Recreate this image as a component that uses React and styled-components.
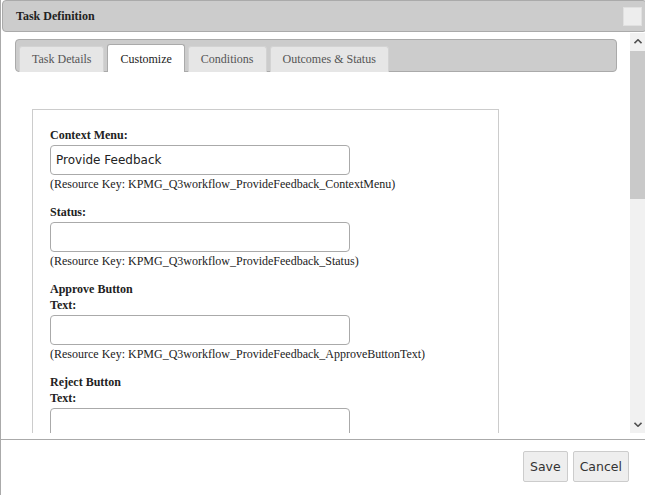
import React from 'react';
import styled, { createGlobalStyle } from 'styled-components';

const GlobalStyle = createGlobalStyle`
  html, body {
    margin: 0;
    padding: 0;
    background: #fff;
  }
  body {
    font-family: "Liberation Serif", "Times New Roman", serif;
    font-size: 12px;
    color: #333;
  }
`;

const Dialog = styled.div`
  width: 645px;
  height: 495px;
  box-sizing: border-box;
  border-left: 1px solid #aaa;
  display: flex;
  flex-direction: column;
  overflow: hidden;
`;

const TitleBar = styled.div`
  height: 32px;
  box-sizing: border-box;
  margin-left: 1px;
  margin-right: -2px;
  background: #ccc;
  border: 1px solid #aaa;
  border-radius: 4px;
  display: flex;
  align-items: center;
  justify-content: space-between;
  padding: 0 4px 0 13px;
  flex-shrink: 0;
`;

const Title = styled.span`
  font-weight: bold;
  font-size: 12px;
  color: #222;
`;

const CloseBox = styled.span`
  width: 19px;
  height: 19px;
  box-sizing: border-box;
  background: #ededed;
  border: 1px solid #e0e0e0;
`;

const Body = styled.div`
  height: 400px;
  margin-top: 1px;
  display: flex;
  flex-shrink: 0;
`;

const Content = styled.div`
  flex: 1;
  overflow: hidden;
  padding: 6px 13px 0 14px;
`;

const TabBar = styled.div`
  height: 33px;
  box-sizing: border-box;
  background: #ccc;
  border: 1px solid #aaa;
  border-radius: 4px;
  display: flex;
  align-items: flex-end;
  gap: 3px;
  padding: 0 3px;
`;

const Tab = styled.div`
  height: ${p => (p.active ? '28px' : '26px')};
  box-sizing: border-box;
  margin-bottom: -1px;
  padding: ${p => (p.active ? '2px' : '0')} 12px 0;
  display: flex;
  align-items: center;
  font-size: 12px;
  background: ${p => (p.active ? '#fff' : '#e6e6e6')};
  border: 1px solid ${p => (p.active ? '#aaa' : '#d3d3d3')};
  border-bottom: none;
  border-radius: 3px 3px 0 0;
  color: ${p => (p.active ? '#212121' : '#555')};
`;

const FormBox = styled.div`
  width: 467px;
  box-sizing: border-box;
  margin: 37px 0 0 17px;
  border: 1px solid #ccc;
  padding: 17px 17px 20px;
`;

const Field = styled.div`
  margin-bottom: 12px;
`;

const Label = styled.div`
  font-weight: bold;
  font-size: 12px;
  line-height: 16px;
  color: #222;
`;

const TextInput = styled.input`
  display: block;
  width: 300px;
  height: 30px;
  box-sizing: border-box;
  margin-top: 2px;
  border: 1px solid #aaa;
  border-radius: 4px;
  padding: 0 5px;
  font-family: "DejaVu Sans", Verdana, sans-serif;
  font-size: 12px;
  color: #222;
  outline: none;
`;

const KeyNote = styled.div`
  font-size: 12px;
  line-height: 16px;
  color: #222;
  margin-top: 1px;
`;

const ScrollBar = styled.div`
  width: 15px;
  background: #f1f1f1;
  display: flex;
  flex-direction: column;
  flex-shrink: 0;
`;

const ScrollButton = styled.div`
  height: 17px;
  display: flex;
  align-items: center;
  justify-content: center;
  flex-shrink: 0;
`;

const ScrollTrack = styled.div`
  flex: 1;
  padding-top: 1px;
`;

const Thumb = styled.div`
  height: 148px;
  background: #c9c9c9;
`;

const Footer = styled.div`
  margin-top: 6px;
  border-top: 1px solid #aaa;
  display: flex;
  justify-content: flex-end;
  gap: 5px;
  padding: 11px 16px 0 0;
`;

const Button = styled.button`
  height: 31px;
  box-sizing: border-box;
  padding: 0 6px;
  background: #eee;
  border: 1px solid #ccc;
  border-radius: 2px;
  font-family: "DejaVu Sans", Verdana, sans-serif;
  font-size: 12.5px;
  color: #333;
`;

const Chevron = ({ down }) => (
  <svg width="8" height="5" viewBox="0 0 8 5">
    <path
      d={down ? 'M0.5 0.8 L4 4.2 L7.5 0.8' : 'M0.5 4.2 L4 0.8 L7.5 4.2'}
      fill="none"
      stroke="#505050"
      strokeWidth="1.6"
    />
  </svg>
);

const tabs = ['Task Details', 'Customize', 'Conditions', 'Outcomes & Status'];

const fields = [
  { label: ['Context Menu:'], value: 'Provide Feedback', key: 'ContextMenu' },
  { label: ['Status:'], value: '', key: 'Status' },
  { label: ['Approve Button', 'Text:'], value: '', key: 'ApproveButtonText' },
  { label: ['Reject Button', 'Text:'], value: '', key: 'RejectButtonText' },
];

const App = () => {
  return (
    <>
      <GlobalStyle />
      <Dialog>
        <TitleBar>
          <Title>Task Definition</Title>
          <CloseBox />
        </TitleBar>
        <Body>
          <Content>
            <TabBar>
              {tabs.map(t => (
                <Tab key={t} active={t === 'Customize'}>{t}</Tab>
              ))}
            </TabBar>
            <FormBox>
              {fields.map(f => (
                <Field key={f.key}>
                  {f.label.map(l => <Label key={l}>{l}</Label>)}
                  <TextInput defaultValue={f.value} />
                  <KeyNote>(Resource Key: KPMG_Q3workflow_ProvideFeedback_{f.key})</KeyNote>
                </Field>
              ))}
            </FormBox>
          </Content>
          <ScrollBar>
            <ScrollButton><Chevron /></ScrollButton>
            <ScrollTrack><Thumb /></ScrollTrack>
            <ScrollButton><Chevron down /></ScrollButton>
          </ScrollBar>
        </Body>
        <Footer>
          <Button>Save</Button>
          <Button>Cancel</Button>
        </Footer>
      </Dialog>
    </>
  );
};

export default App;
